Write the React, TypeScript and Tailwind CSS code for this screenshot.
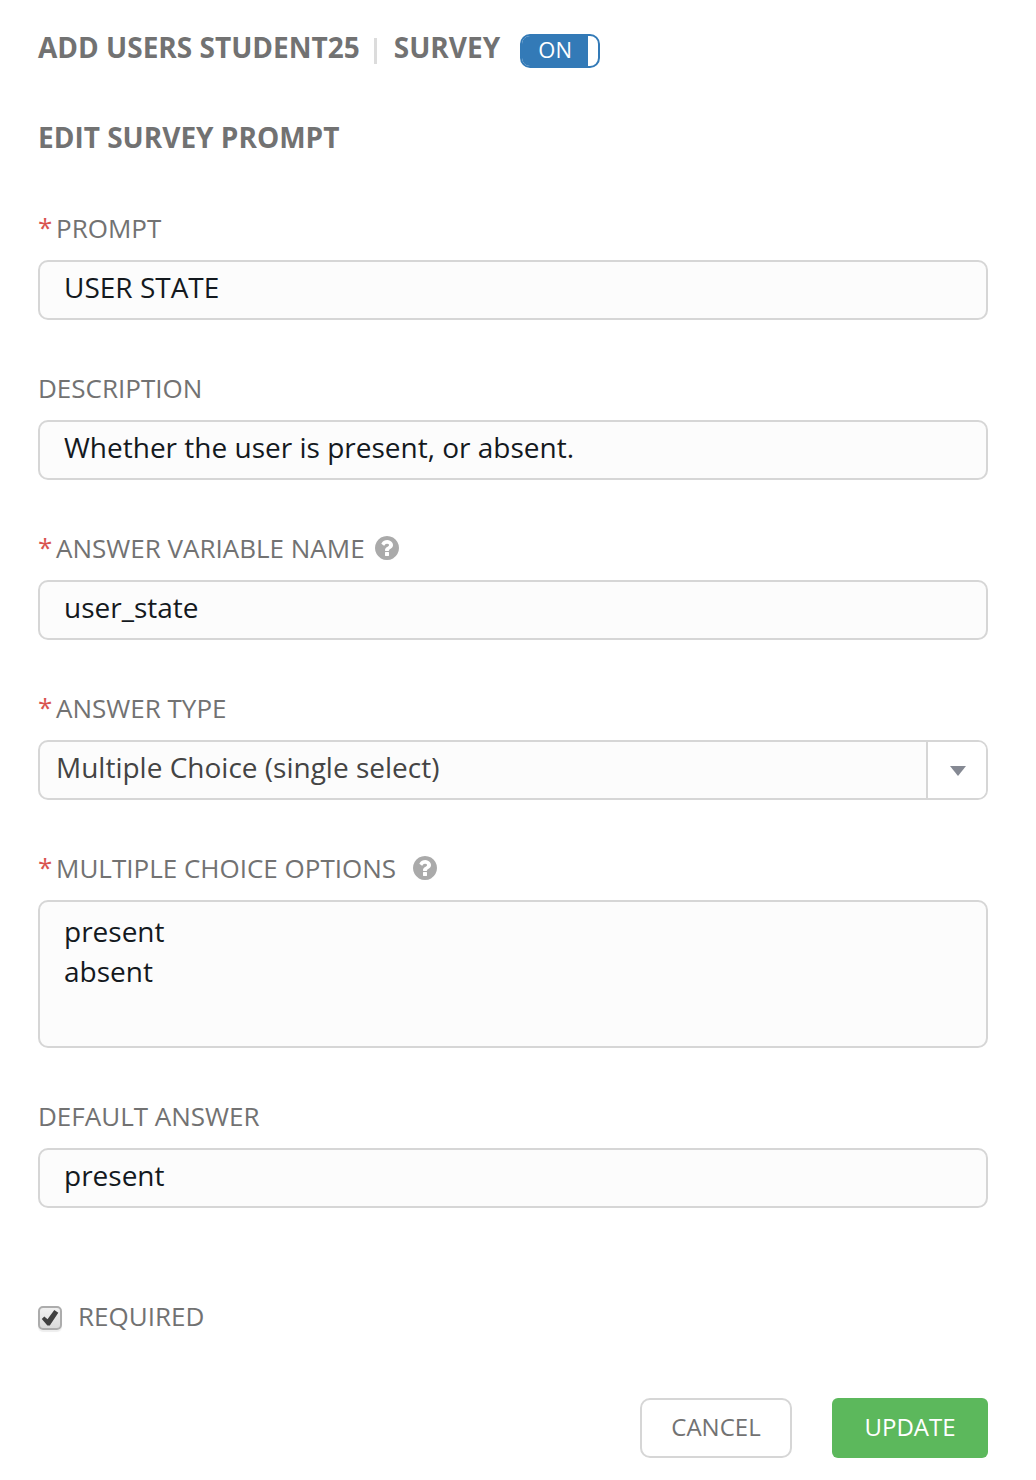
import { useState, type ReactNode } from "react";

const inputBox =
  "block h-[60px] w-full rounded-[10px] border-2 border-[#d6d6d6] bg-[#fcfcfc] px-6 pt-0 pb-1.5 text-[28px] text-[#14191e] outline-none";

function HelpIcon({ className }: { className: string }) {
  return (
    <svg className={className} viewBox="0 128 1536 1536" fill="currentColor">
      <path d="M896 1376v-192q0-14-9-23t-23-9h-192q-14 0-23 9t-9 23v192q0 14 9 23t23 9h192q14 0 23-9t9-23zm256-672q0-88-55.5-163t-138.5-116-170-41q-243 0-371 213-15 24 8 42l132 100q7 6 19 6 16 0 25-12 53-68 86-92 34-24 86-24 48 0 85.500 26t37.500 59q0 38-20 61t-68 45q-63 28-115.500 86.500t-52.500 125.500v36q0 14 9 23t23 9h192q14 0 23-9t9-23q0-19 21.500-49.500t54.500-49.500q32-18 49-28.500t46-35 44.500-48 28-60.500 12.500-81zm384 192q0 209-103 385.500t-279.500 279.500-385.500 103-385.500-103-279.500-279.500-103-385.500 103-385.500 279.500-279.500 385.500-103 385.500 103 279.500 279.500 103 385.500z" />
    </svg>
  );
}

function Field({ label, required = false, help = "", children }: { label: string; required?: boolean; help?: string; children: ReactNode }) {
  return (
    <div>
      <div className="mb-3 flex h-10 items-center text-[26px] leading-10 whitespace-nowrap">
        {required && <span className="w-[18px] -translate-y-px font-medium text-[#d9534f]">*</span>}
        <span>{label}</span>
        {help && <HelpIcon className={help} />}
      </div>
      {children}
    </div>
  );
}

export default function App() {
  const [required, setRequired] = useState(true);
  return (
    <main className="h-[1480px] w-[1036px] bg-white pt-[27px] pr-12 pl-[38px] font-['Open_Sans',sans-serif] text-[#727272]">
      <header className="flex h-10 items-center text-[28px] leading-10 font-bold whitespace-nowrap">
        <h1>ADD USERS STUDENT25</h1>
        <span className="ml-[14px] h-[26px] w-[3px] translate-y-1 bg-[#dcdcdc]" />
        <h1 className="ml-[17px]">SURVEY</h1>
        <button className="ml-5 flex h-[34px] w-20 translate-y-1 overflow-hidden rounded-[10px] border-2 border-[#337ab7] bg-white text-[22px] font-normal text-white">
          <span className="h-[30px] w-[66px] bg-[#337ab7] text-center leading-[26px]">ON</span>
        </button>
      </header>
      <h2 className="mt-[50px] mb-[51px] text-[28px] leading-10 font-bold">EDIT SURVEY PROMPT</h2>

      <form className="flex flex-col gap-12" onSubmit={(e) => e.preventDefault()}>
        <Field label="PROMPT" required>
          <input className={inputBox} defaultValue="USER STATE" />
        </Field>
        <Field label="DESCRIPTION">
          <input className={inputBox} defaultValue="Whether the user is present, or absent." />
        </Field>
        <Field label="ANSWER VARIABLE NAME" required help="ml-[10px] size-6 text-[#aaaaaa]">
          <input className={inputBox} defaultValue="user_state" />
        </Field>
        <Field label="ANSWER TYPE" required>
          <div className="flex h-[60px] overflow-hidden rounded-[10px] border-2 border-[#d6d6d6] bg-[#fcfcfc] text-[28px] leading-[50px] text-[#444444]">
            <span className="flex-1 pl-4">Multiple Choice (single select)</span>
            <span className="flex w-[60px] items-center justify-center border-l-2 border-[#d6d6d6] bg-white pl-0.5">
              <svg className="mt-px h-[10px] w-4" viewBox="0 0 16 10" fill="#858993">
                <path d="M0 0h16L8 10z" />
              </svg>
            </span>
          </div>
        </Field>
        <Field label="MULTIPLE CHOICE OPTIONS" required help="ml-[17px] size-6 text-[#aaaaaa]">
          <textarea
            className="block h-[148px] w-full resize-none rounded-[10px] border-2 border-[#d6d6d6] bg-[#fcfcfc] px-6 pt-[9px] text-[28px] leading-10 text-[#14191e] outline-none"
            defaultValue={"present\nabsent"}
          />
        </Field>
        <Field label="DEFAULT ANSWER">
          <input className={inputBox} defaultValue="present" />
        </Field>

        <label className="mt-10 flex h-10 items-center text-[26px] leading-10">
          <input type="checkbox" className="sr-only" checked={required} onChange={() => setRequired(!required)} />
          <span className="mr-4 flex size-6 translate-y-0.5 items-center justify-center rounded-[5px] border-2 border-[#acacac] bg-linear-to-b from-[#f0f0f0] to-[#dadada] shadow-[0_2px_1px_#eeeeee]">
            {required && (
              <svg className="size-5" viewBox="0 0 20 20" fill="#404040">
                <path d="M1.800 11 4.300 8.500 7.500 11.300 14.300 2 18.300 4.700 9.800 17.400 7.400 17.400z" />
              </svg>
            )}
          </span>
          <span>REQUIRED</span>
        </label>

        <div className="mt-[14px] flex justify-end gap-10 text-2xl leading-[54px]">
          <button className="h-[60px] w-[152px] rounded-[10px] border-2 border-[#d6d6d6] bg-white pb-0.5">CANCEL</button>
          <button className="h-[60px] w-[156px] rounded-md bg-[#5cb85c] pb-0.5 text-white">UPDATE</button>
        </div>
      </form>
    </main>
  );
}
